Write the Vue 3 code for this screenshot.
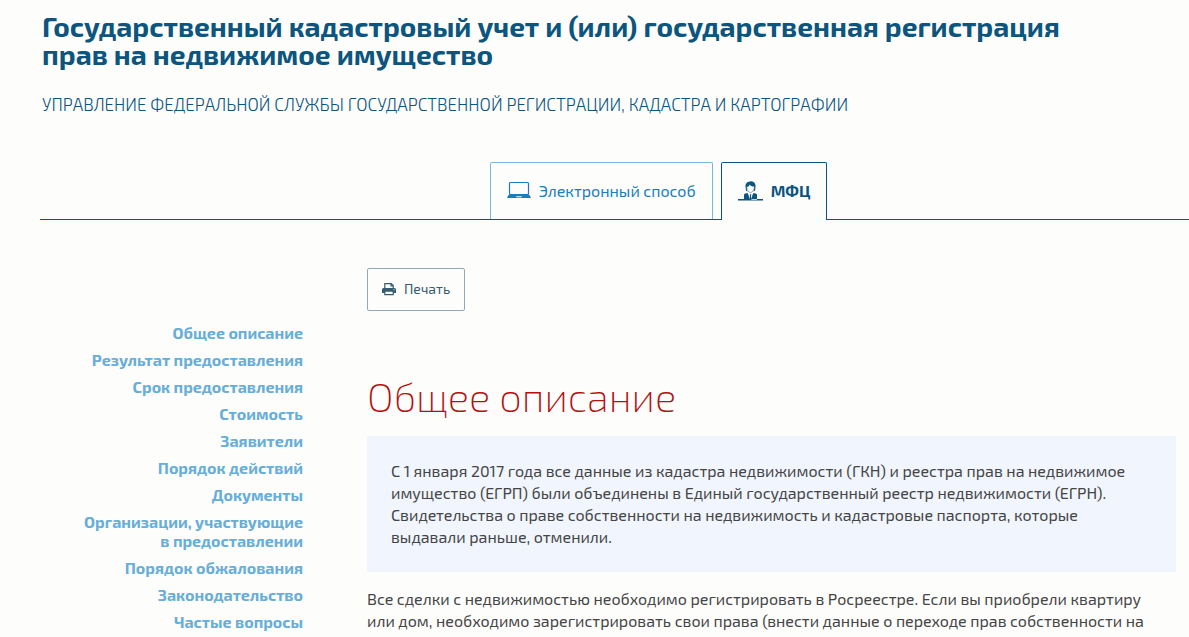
<script setup>
const sections = [
  ['Общее описание'],
  ['Результат предоставления'],
  ['Срок предоставления'],
  ['Стоимость'],
  ['Заявители'],
  ['Порядок действий'],
  ['Документы'],
  ['Организации, участвующие', 'в предоставлении'],
  ['Порядок обжалования'],
  ['Законодательство'],
  ['Частые вопросы'],
]
</script>

<template>
  <div class="page">
    <header class="head">
      <h1>Государственный кадастровый учет и (или) государственная регистрация<br>прав на недвижимое имущество</h1>
      <p class="agency">Управление Федеральной службы государственной регистрации, кадастра и картографии</p>
    </header>

    <div class="tabs" role="tablist">
      <button class="tab" type="button" role="tab" aria-selected="false">
        <svg width="24" height="18" viewBox="0 0 24 18" aria-hidden="true">
          <rect x="2.5" y="1.500" width="19" height="12" rx="1" fill="none" stroke="currentColor" stroke-width="1.2" />
          <path fill="currentColor" fill-rule="evenodd" d="M2 13.500h20l1.700 2.500q.5 1-1 1H1.300q-1.500 0-1-1zM9 15.200l.6 1h4.800l.6-1z" />
        </svg>
        <span>Электронный способ</span>
      </button>
      <button class="tab active" type="button" role="tab" aria-selected="true">
        <svg width="25" height="22" viewBox="0 0 26 22" aria-hidden="true">
          <path fill="currentColor" d="M13 1c3.500-.2 5.500 2.200 5.200 5.700L17.800 10.500l-1.700 1c.8-1.800 1-3.500.6-5.100-2.200.1-3.700-.6-4.500-2.100-.5 1.500-1.600 2.300-3 2.500-.2 1.800 0 3.200.7 4.700L8.300 10.500l-.5-3.800C7.500 3.300 9.500 1 13 1z" />
          <path fill="none" stroke="currentColor" stroke-width=".5" d="M9.400 7.500c.2 3 1.500 5 3.600 5s3.500-2 3.700-5" />
          <path fill="currentColor" d="m10 13 1.200 3 .9 4H6.300l-.1-4.500q0-1.500 1.400-1.800zm6 0-1.200 3-.9 4h5.800l.1-4.500q0-1.500-1.400-1.800zM12.200 14.500h1.600l-.3 1.500.5 3-1 1-1-1 .5-3zM0 19.300h26V21H0z" />
        </svg>
        <span>МФЦ</span>
      </button>
    </div>

    <div class="layout">
      <nav class="side" aria-label="Разделы">
        <a v-for="lines in sections" :key="lines[0]" href="#overview">
          <template v-for="(line, i) in lines" :key="line"><br v-if="i">{{ line }}</template>
        </a>
      </nav>

      <main class="content">
        <button class="print" type="button">
          <svg width="14" height="14" viewBox="0 0 14 14" aria-hidden="true">
            <path fill="none" stroke="currentColor" stroke-width="1.200" d="M2.800 6V1.600h6.400l2 2V6M9 1.600V4h2.200" />
            <path fill="currentColor" fill-rule="evenodd" d="M1.500 6h11Q14 6 14 7.500V11h-2.200v2.200H2.200V11H0V7.500Q0 6 1.500 6zM3.400 9.800V12h7.200V9.800zM11.500 7.200v1h1v-1z" />
          </svg>
          <span>Печать</span>
        </button>
        <h2 id="overview">Общее описание</h2>
        <div class="note">
          С 1 января 2017 года все данные из кадастра недвижимости (ГКН) и реестра прав на недвижимое<br>
          имущество (ЕГРП) были объединены в Единый государственный реестр недвижимости (ЕГРН).<br>
          Свидетельства о праве собственности на недвижимость и кадастровые паспорта, которые<br>
          выдавали раньше, отменили.
        </div>
        <p class="text">
          Все сделки с недвижимостью необходимо регистрировать в Росреестре. Если вы приобрели квартиру<br>
          или дом, необходимо зарегистрировать свои права (внести данные о переходе прав собственности на
        </p>
      </main>
    </div>
  </div>
</template>

<style>
body {
  background: #fdfdfc;
}
</style>

<style scoped>
.page {
  padding: 12px 0 0 40px;
  color: #454545;
  font-family: "Exo 2", Roboto, "Noto Sans", sans-serif;
  font-size: 16px;
  line-height: 22px;
  white-space: nowrap;
}
h1,
h2,
p {
  margin: 0;
}
.head {
  padding-left: 2px;
  color: #0b557e;
}
h1 {
  font-size: 28px;
  line-height: 28px;
  font-weight: 700;
}
.agency {
  margin-top: 25px;
  font-size: 17px;
  font-weight: 300;
  text-transform: uppercase;
}
.tabs {
  display: flex;
  justify-content: center;
  gap: 8px;
  margin-top: 47px;
  padding-left: 88px;
  box-shadow: inset 0 -1px #0b557e;
}
button {
  display: flex;
  align-items: center;
  font-family: inherit;
  background: #fdfdfc;
  cursor: pointer;
}
.tab {
  gap: 8px;
  height: 57px;
  margin-bottom: 1px;
  padding: 0 16px 2px;
  border: 1px solid #77b9dd;
  border-bottom: 0;
  border-radius: 2px 2px 0 0;
  color: #1a7dbd;
  font-size: 16px;
}
.tab.active {
  height: 58px;
  margin-bottom: 0;
  border-color: #0b557e;
  color: #0b557e;
  font-weight: 700;
}
.layout {
  display: grid;
  grid-template-columns: 263px minmax(0, 1fr);
  column-gap: 64px;
  padding: 48px 13px 0 0;
}
.side {
  display: flex;
  flex-direction: column;
  gap: 8px;
  padding-top: 55px;
  text-align: right;
}
.side a {
  color: #67aed8;
  font-size: 16px;
  font-weight: 700;
  line-height: 19px;
  text-decoration: none;
}
.print {
  gap: 8px;
  height: 43px;
  padding: 0 14px 2px;
  border: 1px solid #8fa9b7;
  border-radius: 2px;
  color: #355c70;
  font-size: 14px;
}
h2 {
  margin-top: 61px;
  color: #b3100f;
  font-size: 40px;
  font-weight: 200;
  line-height: 48px;
}
.note {
  margin-top: 16px;
  padding: 24px;
  background: #f0f5fe;
}
.text {
  margin-top: 16px;
}
</style>
